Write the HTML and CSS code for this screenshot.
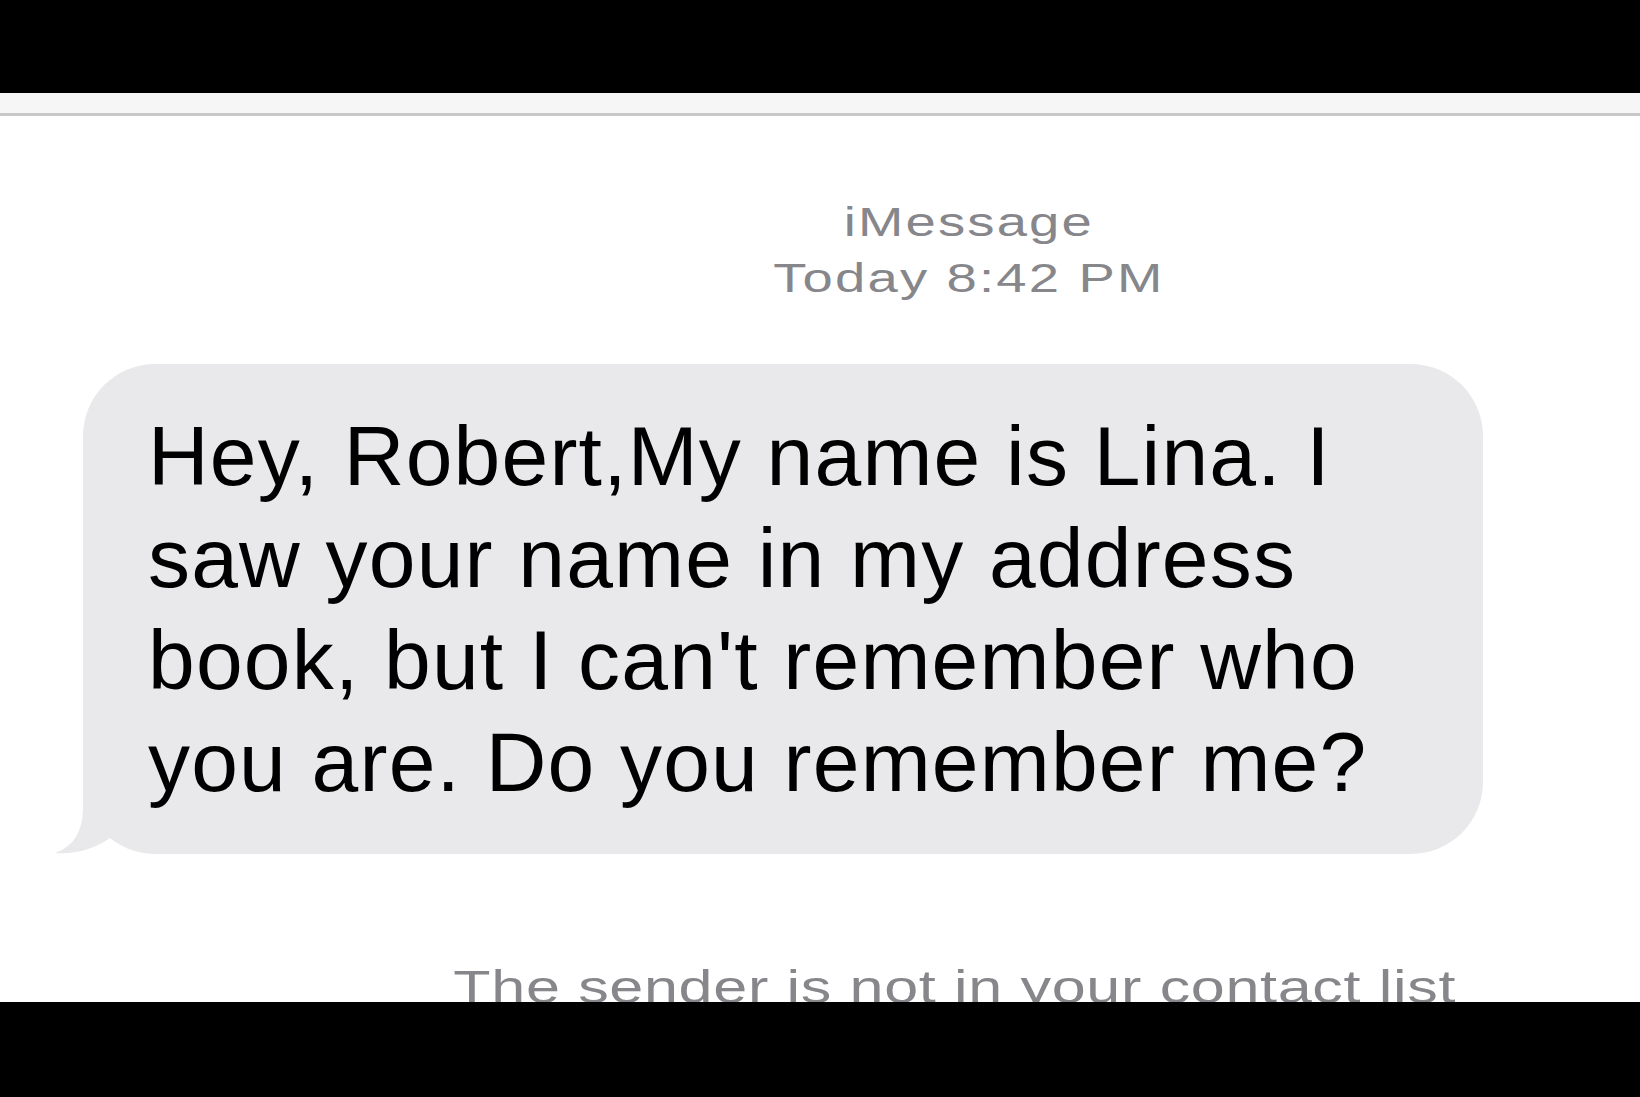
FILE: index.html
```html
<!DOCTYPE html>
<html lang="en">
<head>
    <meta charset="UTF-8">
    <meta name="viewport" content="width=device-width, initial-scale=1.0">
    <title>Messages</title>
    <link rel="stylesheet" href="styles.css">
</head>
<body>
    <div class="screen">
        <div class="navbar"></div>

        <div class="thread">
            <div class="stamp">
                <div class="service">iMessage</div>
                <div class="time">Today 8:42&nbsp;PM</div>
            </div>

            <div class="bubble">
                Hey, Robert,My name is Lina. I<br>
                saw your name in my address<br>
                book, but I can't remember who<br>
                you are. Do you remember me?
                <svg class="tail" width="120" height="70" viewBox="0 0 120 70">
                    <path d="M30 0 L30 22 C30 46 22 62 2 69 C22 71 44 64 60 52 C76 63 96 70 120 70 L120 0 Z"/>
                </svg>
            </div>

            <div class="note">The sender is not in your contact list</div>
        </div>
    </div>
</body>
</html>
```

FILE: styles.css
```css
body {
    margin: 0;
    background-color: #000;
    font-family: "Liberation Sans", Arial, sans-serif;
}
.screen {
    margin-top: 93px;
    height: 909px;
    background-color: #fff;
    overflow: hidden;
}
.navbar {
    height: 20px;
    background: #f6f6f6;
    border-bottom: 3px solid #c8c8c8;
}
.thread {
    display: flex;
    flex-direction: column;
}
.stamp {
    align-self: center;
    margin: 78px 0 0 298px;
    text-align: center;
    color: #86868b;
    font-size: 40px;
    line-height: 56px;
    letter-spacing: 1.6px;
    transform: scaleX(1.36);
}
.bubble {
    position: relative;
    isolation: isolate;
    box-sizing: border-box;
    width: 1400px;
    margin: 58px 0 0 83px;
    padding: 41px 0 41px 65px;
    background: #e9e9eb;
    border-radius: 72px;
    color: #000;
    font-size: 84px;
    line-height: 102px;
    letter-spacing: 1.2px;
    white-space: nowrap;
}
.tail {
    position: absolute;
    left: -30px;
    bottom: 0;
    z-index: -1;
    fill: #e9e9eb;
}
.note {
    align-self: center;
    margin: 105px 0 0 270px;
    color: #86868b;
    font-size: 47px;
    line-height: 55px;
    letter-spacing: 0.5px;
    white-space: nowrap;
    transform: scaleX(1.3);
}
```
